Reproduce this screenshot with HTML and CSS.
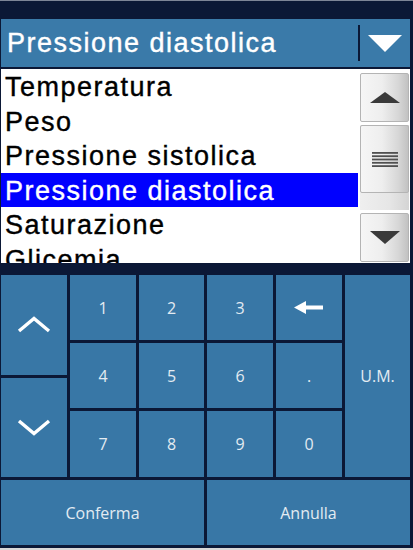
FILE: index.html
```html
<!DOCTYPE html>
<html lang="it">
<head>
<meta charset="utf-8">
<title>Pressione diastolica</title>
<link rel="stylesheet" href="styles.css">
</head>
<body>
<div class="screen">
  <div class="topbar"></div>
  <div class="combo">
    <span class="combo-text">Pressione diastolica</span>
    <span class="combo-divider"></span>
    <svg class="combo-arrow" width="34" height="17" viewBox="0 0 34 17"><polygon points="0,0 34,0 17,17" fill="#ffffff"/></svg>
  </div>
  <div class="listbox">
    <ul class="items">
      <li class="item">Temperatura</li>
      <li class="item">Peso</li>
      <li class="item">Pressione sistolica</li>
      <li class="item selected">Pressione diastolica</li>
      <li class="item">Saturazione</li>
      <li class="item">Glicemia</li>
    </ul>
    <div class="scrollbar">
      <div class="sb-btn">
        <svg width="30" height="11" viewBox="0 0 30 11"><polygon points="15,0 30,11 0,11" fill="#3a3a3a"/></svg>
      </div>
      <div class="sb-track">
        <div class="sb-thumb">
          <svg width="26" height="15" viewBox="0 0 26 15">
            <rect x="0" y="0" width="26" height="1.8" fill="#505050"/>
            <rect x="0" y="3.3" width="26" height="1.8" fill="#505050"/>
            <rect x="0" y="6.6" width="26" height="1.8" fill="#505050"/>
            <rect x="0" y="9.9" width="26" height="1.8" fill="#505050"/>
            <rect x="0" y="13.2" width="26" height="1.8" fill="#505050"/>
          </svg>
        </div>
      </div>
      <div class="sb-btn">
        <svg width="30" height="13" viewBox="0 0 30 13"><polygon points="0,0 30,0 15,13" fill="#3a3a3a"/></svg>
      </div>
    </div>
  </div>
  <div class="keypad">
    <div class="nav-col">
      <div class="key">
        <svg width="34" height="17" viewBox="0 0 34 17"><polyline points="2,15 17,2.5 32,15" fill="none" stroke="#ffffff" stroke-width="3.4"/></svg>
      </div>
      <div class="key">
        <svg width="34" height="17" viewBox="0 0 34 17"><polyline points="2,2 17,14.5 32,2" fill="none" stroke="#ffffff" stroke-width="3.4"/></svg>
      </div>
    </div>
    <div class="key">1</div>
    <div class="key">2</div>
    <div class="key">3</div>
    <div class="key">
      <svg width="30" height="13" viewBox="0 0 30 13"><polygon points="0,6.5 12,0 12,4.6 29,4.6 29,8.4 12,8.4 12,13" fill="#ffffff"/></svg>
    </div>
    <div class="key key-um">U.M.</div>
    <div class="key">4</div>
    <div class="key">5</div>
    <div class="key">6</div>
    <div class="key">.</div>
    <div class="key">7</div>
    <div class="key">8</div>
    <div class="key">9</div>
    <div class="key">0</div>
    <div class="key key-wide">Conferma</div>
    <div class="key key-wide">Annulla</div>
  </div>
  <div class="bottom-strip"></div>
</div>
</body>
</html>
```

FILE: styles.css
```css
html, body {
  margin: 0;
  padding: 0;
}

body {
  background: #0b1836;
}

.screen {
  width: 413px;
  height: 550px;
  box-sizing: border-box;
  border-top: 1px solid #7d8597;
  padding: 0 3px 0 1px;
  background: #0b1836;
  display: flex;
  flex-direction: column;
  overflow: hidden;
}

.topbar {
  height: 18px;
  flex: none;
}

.combo {
  height: 48px;
  flex: none;
  margin-bottom: 2px;
  background: #3a7aa9;
  display: flex;
  align-items: center;
  padding-left: 6px;
}

.combo-text {
  color: #ffffff;
  font-family: "Liberation Sans", Arial, sans-serif;
  font-size: 27px;
  letter-spacing: 1.5px;
  -webkit-text-stroke: 0.4px #ffffff;
  white-space: nowrap;
  padding-top: 1px;
}

.combo-divider {
  margin-left: auto;
  width: 2px;
  height: 36px;
  background: #0b1836;
  margin-right: 8px;
}

.combo-arrow {
  margin-right: 8px;
  display: block;
}

.listbox {
  height: 194px;
  flex: none;
  background: #ffffff;
  display: flex;
}

.items {
  list-style: none;
  margin: 0;
  padding: 0;
  width: 357px;
  flex: none;
  overflow: hidden;
}

.item {
  box-sizing: border-box;
  height: 34.5px;
  padding-top: 3px;
  line-height: 31.5px;
  padding-left: 4px;
  color: #000000;
  font-family: "Liberation Sans", Arial, sans-serif;
  font-size: 27px;
  letter-spacing: 1.5px;
  -webkit-text-stroke: 0.4px #000000;
  white-space: nowrap;
}

.item.selected {
  background: #0000ff;
  color: #ffffff;
  -webkit-text-stroke: 0.4px #ffffff;
}

.scrollbar {
  flex: 1;
  display: flex;
  flex-direction: column;
  gap: 3px;
  padding: 4px 1px 1px 2px;
  background: #ffffff;
}

.sb-btn {
  height: 47px;
  flex: none;
  border: 1px solid #b4b4b4;
  border-radius: 2px;
  background: linear-gradient(to right, #f6f6f6 0%, #eeeeee 45%, #d6d6d6 80%, #c2c2c2 100%);
  display: flex;
  align-items: center;
  justify-content: center;
}

.sb-track {
  flex: 1;
  display: flex;
  flex-direction: column;
  background: linear-gradient(to right, #efefef 0%, #e6e6e6 60%, #d4d4d4 100%);
}

.sb-thumb {
  height: 66px;
  border: 1px solid #b4b4b4;
  border-radius: 2px;
  background: linear-gradient(to right, #f6f6f6 0%, #eeeeee 45%, #d6d6d6 80%, #c2c2c2 100%);
  display: flex;
  align-items: center;
  justify-content: center;
}

.keypad {
  flex: none;
  padding-top: 12px;
  padding-bottom: 3px;
  display: grid;
  grid-template-columns: 66px 66px 65px 66px 66px 1fr;
  grid-template-rows: 65px 65px 66px 65px;
  gap: 3px;
}

.key {
  background: #3877a6;
  color: #e3ebf2;
  font-family: "Open Sans", sans-serif;
  font-size: 16px;
  display: flex;
  align-items: center;
  justify-content: center;
}

.nav-col {
  grid-column: 1;
  grid-row: 1 / span 3;
  display: flex;
  flex-direction: column;
  gap: 3px;
}

.nav-col .key {
  flex: 1;
}

.key-um {
  grid-column: 6;
  grid-row: 1 / span 3;
}

.key-wide {
  grid-column: span 3;
}

.bottom-strip {
  flex: 1;
  margin: 0 -3px 0 -1px;
  background: #d8d8d8;
}
```
